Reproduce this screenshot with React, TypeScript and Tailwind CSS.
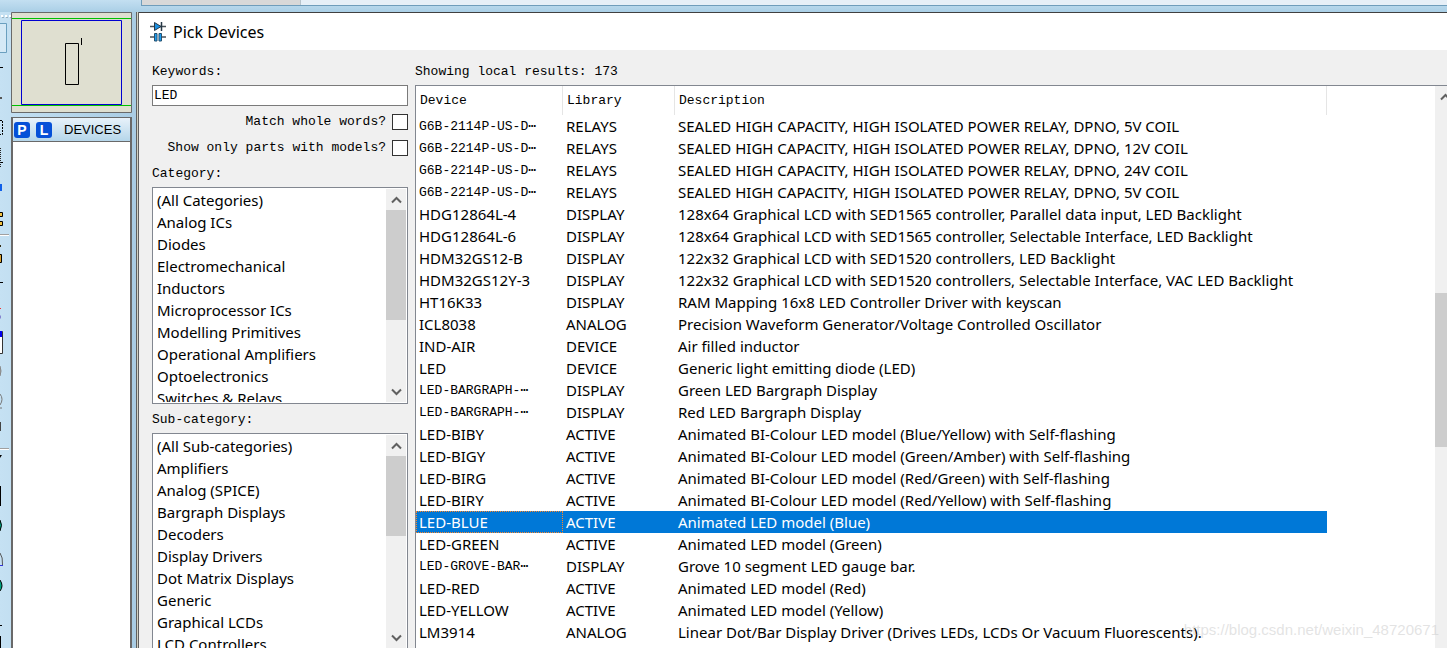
import React from "react";

const categories = ["(All Categories)", "Analog ICs", "Diodes", "Electromechanical", "Inductors", "Microprocessor ICs", "Modelling Primitives", "Operational Amplifiers", "Optoelectronics", "Switches & Relays"];
const subCategories = ["(All Sub-categories)", "Amplifiers", "Analog (SPICE)", "Bargraph Displays", "Decoders", "Display Drivers", "Dot Matrix Displays", "Generic", "Graphical LCDs", "LCD Controllers"];

type Part = [device: string, library: string, description: string];

const parts: Part[] = [
  ["G6B-2114P-US-D⋯", "RELAYS", "SEALED HIGH CAPACITY, HIGH ISOLATED POWER RELAY, DPNO, 5V COIL"],
  ["G6B-2214P-US-D⋯", "RELAYS", "SEALED HIGH CAPACITY, HIGH ISOLATED POWER RELAY, DPNO, 12V COIL"],
  ["G6B-2214P-US-D⋯", "RELAYS", "SEALED HIGH CAPACITY, HIGH ISOLATED POWER RELAY, DPNO, 24V COIL"],
  ["G6B-2214P-US-D⋯", "RELAYS", "SEALED HIGH CAPACITY, HIGH ISOLATED POWER RELAY, DPNO, 5V COIL"],
  ["HDG12864L-4", "DISPLAY", "128x64 Graphical LCD with SED1565 controller, Parallel data input, LED Backlight"],
  ["HDG12864L-6", "DISPLAY", "128x64 Graphical LCD with SED1565 controller, Selectable Interface, LED Backlight"],
  ["HDM32GS12-B", "DISPLAY", "122x32 Graphical LCD with SED1520 controllers, LED Backlight"],
  ["HDM32GS12Y-3", "DISPLAY", "122x32 Graphical LCD with SED1520 controllers, Selectable Interface, VAC LED Backlight"],
  ["HT16K33", "DISPLAY", "RAM Mapping 16x8 LED Controller Driver with keyscan"],
  ["ICL8038", "ANALOG", "Precision Waveform Generator/Voltage Controlled Oscillator"],
  ["IND-AIR", "DEVICE", "Air filled inductor"],
  ["LED", "DEVICE", "Generic light emitting diode (LED)"],
  ["LED-BARGRAPH-⋯", "DISPLAY", "Green LED Bargraph Display"],
  ["LED-BARGRAPH-⋯", "DISPLAY", "Red LED Bargraph Display"],
  ["LED-BIBY", "ACTIVE", "Animated BI-Colour LED model (Blue/Yellow) with Self-flashing"],
  ["LED-BIGY", "ACTIVE", "Animated BI-Colour LED model (Green/Amber) with Self-flashing"],
  ["LED-BIRG", "ACTIVE", "Animated BI-Colour LED model (Red/Green) with Self-flashing"],
  ["LED-BIRY", "ACTIVE", "Animated BI-Colour LED model (Red/Yellow) with Self-flashing"],
  ["LED-BLUE", "ACTIVE", "Animated LED model (Blue)"],
  ["LED-GREEN", "ACTIVE", "Animated LED model (Green)"],
  ["LED-GROVE-BAR⋯", "DISPLAY", "Grove 10 segment LED gauge bar."],
  ["LED-RED", "ACTIVE", "Animated LED model (Red)"],
  ["LED-YELLOW", "ACTIVE", "Animated LED model (Yellow)"],
  ["LM3914", "ANALOG", "Linear Dot/Bar Display Driver (Drives LEDs, LCDs Or Vacuum Fluorescents)."],
];

function Chevron({ down = false }: { down?: boolean }) {
  return (
    <svg width="11" height="8" viewBox="0 0 11 8" className="shrink-0" aria-hidden="true">
      <path d={down ? "M1 1.5 5.5 6 10 1.5" : "M1 6.5 5.5 2 10 6.5"} fill="none" stroke="#606060" strokeWidth="2" />
    </svg>
  );
}

function ListPanel({ id, items, children }: { id: string; items: string[]; children: React.ReactNode }) {
  return (
    <div className="flex h-[217px] shrink-0 border border-[#828790] bg-white p-px">
      <ul aria-labelledby={id} className="flex-1 overflow-hidden pl-[3px] text-[15px] leading-[22px]">
        {items.map((item) => (
          <li key={item} className="whitespace-nowrap">{item}</li>
        ))}
      </ul>
      <div className="flex w-5 flex-col bg-[#f0f0f0]">
        <button type="button" aria-label="Scroll up" className="flex h-[21px] items-center justify-center"><Chevron /></button>
        {children}
        <button type="button" aria-label="Scroll down" className="mt-auto flex h-[21px] items-center justify-center"><Chevron down /></button>
      </div>
    </div>
  );
}

function ToolStrip() {
  return (
    <svg width="11" height="636" viewBox="0 0 11 636" className="shrink-0" aria-hidden="true">
      <path d="M1 4H3M5 4H7M9 4H11" stroke="#fff" strokeWidth="2" />
      <path d="M2 5.500H4M6 5.500H8M10 5.500H11" stroke="#9ab0be" />
      <path d="M0 11.500H6.500V40.500H0" fill="#d5e9f6" stroke="#6a9fbf" />
      <path d="M0 55.500H3M0 150.500H3" stroke="#000" />
      <path d="M0 86H2" stroke="#555" strokeWidth="2" />
      <path d="M0 108.500H2.500V122.500H0" fill="none" stroke="#000" strokeDasharray="2 1" />
      <path d="M0.500 136V156" stroke="#222" strokeDasharray="1 1" />
      <path d="M0 172H2V179H0Z" fill="#1060ea" />
      <path d="M0 200.500H2.500V204.500H0M0 209.500H2.500V213.500H0" fill="#f3c13e" stroke="#000" />
      <path d="M0 222.500H9M0 436.500H9" stroke="#a0a0a0" />
      <path d="M0 223.500H9M0 437.500H9" stroke="#fff" />
      <path d="M0 234H1" stroke="#332b11" strokeWidth="2" />
      <path d="M0 242.500H1.500V250.500H0" fill="#dda22e" stroke="#000" />
      <path d="M0 270.500H3" stroke="#000" />
      <path d="M0 296.500H1" stroke="#f03030" />
      <path d="M0 305H1" stroke="#8585cf" strokeWidth="3" />
      <path d="M0 319.500H2.500V341.500H0" fill="#fff" stroke="#333" />
      <path d="M0 319H2V325H0Z" fill="#00e" />
      <path d="M0 354Q2 359 0 364" fill="#a0a0a0" stroke="#888" />
      <path d="M0 382Q4 387 0 393M0 396H2" fill="none" stroke="#777" />
      <path d="M0 410H1V419H0Z" fill="#444" />
      <path d="M0 443H2L0 446Z" />
      <path d="M0.500 474V494" stroke="#000" />
      <path d="M0 508Q3 513 0 519M0 568Q4 574 0 579" fill="#00a480" stroke="#000" />
      <path d="M0 541Q3 545 2.500 553" fill="none" stroke="#555" />
      <path d="M0 553.500H3" stroke="#33d" />
      <path d="M0 613.500H2" stroke="#000" />
      <path d="M0.500 624V636" stroke="#000" />
    </svg>
  );
}

function Preview() {
  return (
    <svg width="121" height="101" viewBox="0 0 121 101" className="block shrink-0" aria-label="Schematic overview">
      <path d="M.5.5H120.500V100.500H.5Z" fill="#dfdfd0" stroke="#696969" />
      <path d="M1 6.500H120M1 93.500H120" stroke="#00c000" />
      <path d="M10.500 8.500H110.500V92.500H10.500Z" fill="none" stroke="#0000d0" />
      <path d="M54.500 31.500H67.500V72.500H54.500ZM70.500 26V33" fill="none" stroke="#000" />
    </svg>
  );
}

const badge = "flex h-4 w-4 items-center justify-center rounded-[3px] bg-[#0550d8] font-['Liberation_Sans',sans-serif] text-[14px] font-bold leading-none text-white";
const mono = "font-['Liberation_Mono',monospace] text-[13px]";

export default function App() {
  return (
    <div className="relative flex h-screen flex-col overflow-hidden bg-[#b9d9ec] font-['Noto_Sans',sans-serif] text-[15px] text-black">
      <div className="flex h-3 shrink-0 items-start bg-linear-to-b from-[#c3dff1] to-[#aacfe6]">
        <div className="ml-[141px] flex h-[6px] flex-1 border-b border-l border-[#6f9dbb] bg-[#e6eff7]">
          <div className="w-[159px] border-r border-[#b8c4cc] bg-[#d8d8d8]" />
        </div>
      </div>

      <div className="flex min-h-0 flex-1">
        <aside className="flex w-[136px] shrink-0 bg-linear-to-r from-[#c5e1f3] to-[#a9cce3]">
          <ToolStrip />
          <div className="flex min-h-0 w-[121px] flex-col">
            <Preview />
            <div className="mt-1 flex min-h-0 flex-1 flex-col border-x-2 border-t border-[#696969]">
              <div className="flex h-[23px] shrink-0 items-center gap-[6px] bg-linear-to-b from-[#e8f2fa] to-[#b5d6ea] pl-px">
                <button type="button" className={badge}>P</button>
                <button type="button" className={badge}>L</button>
                <h2 className="ml-[6px] font-['Liberation_Sans',sans-serif] text-[13px]">DEVICES</h2>
              </div>
              <div className="flex-1 border-t border-[#696969] bg-white" />
            </div>
          </div>
        </aside>
        <div className="w-[3px] shrink-0 border-x border-[#606060] bg-[#d2d2c3]" />

        <main className="flex min-w-0 flex-1 flex-col border-t border-[#404040] bg-[#f0f0f0]">
          <header className="flex h-[37px] shrink-0 items-center gap-[6px] bg-white pl-[11px]">
            <svg width="17" height="21" viewBox="0 0 17 21" aria-hidden="true">
              <path d="M0 5.500H16M0 16H5M11 16H16" stroke="#4a5258" strokeWidth="1.500" />
              <path d="M4.500 1.500V9.500L11 5.500Z" fill="#1b8fe0" stroke="#263746" />
              <path d="M11.500 1V10" stroke="#263746" strokeWidth="1.500" />
              <path d="M4.500 12.500H7V20H4.500ZM9 12.500H11.500V20H9Z" fill="#1b9cf0" stroke="#26506e" />
            </svg>
            <h1 className="text-[16px]">Pick Devices</h1>
          </header>

          <div className="flex min-h-0 flex-1 gap-[7px] pl-[13px]">
            <section className="flex w-[256px] shrink-0 flex-col pt-[10px]">
              <label htmlFor="keywords" className={mono + " h-[25px] shrink-0 leading-6"}>Keywords:</label>
              <input id="keywords" defaultValue="LED" className={mono + " h-[21px] shrink-0 border border-[#7a7a7a] bg-white px-px outline-none"} />
              <div className="flex h-14 shrink-0 flex-col items-end gap-[6px] pt-[6px]">
                <label className={mono + " flex h-5 shrink-0 items-center gap-[6px]"}>
                  Match whole words?
                  <input type="checkbox" className="h-4 w-4 appearance-none border border-[#333] bg-white" />
                </label>
                <label className={mono + " flex h-5 shrink-0 items-center gap-[6px]"}>
                  Show only parts with models?
                  <input type="checkbox" className="h-4 w-4 appearance-none border border-[#333] bg-white" />
                </label>
              </div>
              <h2 id="category" className={mono + " h-[25px] shrink-0 leading-6"}>Category:</h2>
              <ListPanel id="category" items={categories}><div className="h-[110px] bg-[#cdcdcd]" /></ListPanel>
              <h2 id="subcategory" className={mono + " mt-1 h-[25px] shrink-0 leading-6"}>Sub-category:</h2>
              <ListPanel id="subcategory" items={subCategories}><div className="h-20 bg-[#cdcdcd]" /></ListPanel>
            </section>

            <section className="flex min-w-0 flex-1 flex-col pt-[10px]">
              <h2 className={mono + " h-[25px] shrink-0 leading-6"}>Showing local results: 173</h2>
              <div className="flex min-h-0 flex-1 border-t border-l border-[#828790] bg-white">
                <div className="min-w-0 flex-1 overflow-hidden">
                  <table className="w-[911px] table-fixed border-separate border-spacing-0 text-left">
                    <colgroup>
                      <col className="w-[147px]" />
                      <col className="w-[112px]" />
                      <col />
                    </colgroup>
                    <thead className={mono}>
                      <tr className="h-[29px]">
                        <th className="border-r border-[#e5e5e5] p-0 pl-1 font-normal">Device</th>
                        <th className="border-r border-[#e5e5e5] p-0 pl-1 font-normal">Library</th>
                        <th className="border-r border-[#e5e5e5] p-0 pl-1 font-normal">Description</th>
                      </tr>
                    </thead>
                    <tbody>
                      {parts.map(([device, library, description], i) => {
                        const selected = device === "LED-BLUE";
                        return (
                          <tr key={i} aria-selected={selected} className={selected ? "h-[22px] bg-[#0078d7] text-white" : "h-[22px]"}>
                            <td className="p-0">
                              <div className={(selected ? "outline-1 -outline-offset-1 outline-dotted outline-[#ff8728] " : "") + (device.endsWith("⋯") ? mono + " leading-6 " : "leading-[22px] ") + "h-[22px] overflow-hidden pl-[3px] whitespace-nowrap"}>{device}</div>
                            </td>
                            <td className="p-0 pl-[3px] leading-[22px]">{library}</td>
                            <td className="p-0 pl-[3px] leading-[22px] whitespace-nowrap">{description}</td>
                          </tr>
                        );
                      })}
                    </tbody>
                  </table>
                </div>
                <div className="flex w-3 shrink-0 flex-col overflow-hidden bg-[#f0f0f0]">
                  <button type="button" aria-label="Scroll results up" className="flex h-[21px] shrink-0 items-center pl-[5px]"><Chevron /></button>
                  <div className="mt-[186px] h-[154px] bg-[#cdcdcd]" />
                </div>
              </div>
            </section>
          </div>
        </main>
      </div>
      <p className="pointer-events-none absolute right-2 bottom-2 font-['Liberation_Sans',sans-serif] text-[15px] leading-5 text-[#c8c8c8]/50">https://blog.csdn.net/weixin_48720671</p>
    </div>
  );
}
